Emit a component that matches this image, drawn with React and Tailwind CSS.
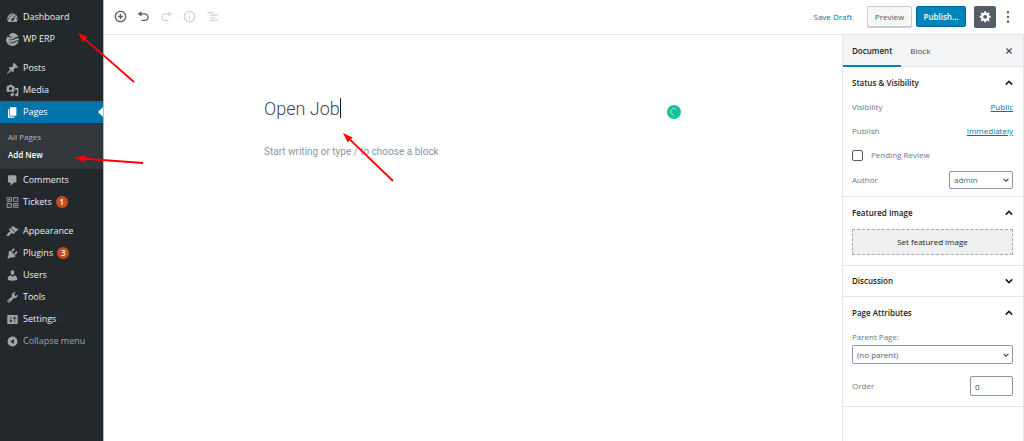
import { useState } from 'react'
import clsx from 'clsx'

const icons = {
  dashboard:
    'M3.76 17h12.48c1.1-1.36 1.76-3.09 1.76-4.97 0-4.42-3.58-8.03-8-8.03s-8 3.61-8 8.03c0 1.88.66 3.61 1.76 4.97zM10 5a1 1 0 1 1 0 2 1 1 0 0 1 0-2zM6 7a1 1 0 1 1 0 2 1 1 0 0 1 0-2zM14.5 6.6l.6.5-3.4 5.4c.5.9.3 2-.6 2.6-1 .6-2.2.3-2.7-.6-.6-1-.3-2.2.6-2.7.3-.2.7-.3 1-.3zM4 10.5a1 1 0 1 1 0 2 1 1 0 0 1 0-2zM16 10.5a1 1 0 1 1 0 2 1 1 0 0 1 0-2z',
  post: 'M10.44 3.02l1.82-1.82 6.36 6.35-1.83 1.82c-1.05-.68-2.48-.57-3.41.36l-.75.75c-.92.93-1.04 2.35-.35 3.41l-1.83 1.82-2.41-2.41-2.8 2.79c-.42.42-3.38 2.71-3.8 2.29s1.86-3.39 2.28-3.81l2.79-2.79L4.1 9.36l1.83-1.82c1.05.69 2.48.57 3.4-.36l.75-.75c.93-.92 1.05-2.35.36-3.41z',
  media:
    'M13 11V4c0-.55-.45-1-1-1h-1.67L9 1H5L3.67 3H2c-.55 0-1 .45-1 1v7c0 .55.45 1 1 1h10c.55 0 1-.45 1-1zM7 4.5c1.38 0 2.5 1.12 2.5 2.5S8.38 9.5 7 9.5 4.5 8.38 4.5 7 5.62 4.5 7 4.5zM14 6h5v10.5c0 1.38-1.12 2.5-2.5 2.5S14 17.88 14 16.5s1.12-2.5 2.5-2.5c.17 0 .34.02.5.05V9h-3V6zm-4 8.05V13h2v3.5c0 1.38-1.12 2.5-2.5 2.5S7 17.88 7 16.5 8.12 14 9.5 14c.17 0 .34.02.5.05z',
  page: 'M6 15V2h10v13H6zm-1 1h8v2H3V5h2v11z',
  comments:
    'M5 2h9c1.1 0 2 .9 2 2v7c0 1.1-.9 2-2 2h-2l-5 5v-5H5c-1.1 0-2-.9-2-2V4c0-1.1.9-2 2-2z',
  appearance:
    'M14.48 11.06L7.41 3.99l1.5-1.5c.5-.56 2.3-.47 3.51.32 1.21.8 1.43 1.28 2.91 2.1 1.18.64 2.45 1.26 4.45.85zm-.71.71L6.7 4.7 4.93 6.47c-.39.39-.39 1.02 0 1.41l1.06 1.06c.39.39.39 1.03 0 1.42-.6.6-1.43 1.11-2.21 1.69-.35.26-.7.53-1.01.84C1.43 14.23.4 16.08 1.4 17.07c.99 1 2.84-.03 4.18-1.36.31-.31.58-.66.85-1.02.57-.78 1.08-1.61 1.69-2.21.39-.39 1.02-.39 1.41 0l1.06 1.06c.39.39 1.02.39 1.41 0z',
  plugins:
    'M13.11 4.36L9.87 7.6 8 5.73l3.24-3.24c.35-.34 1.05-.2 1.56.32.52.51.66 1.21.31 1.55zm-8 1.77l.91-1.12 9.01 9.01-1.19.84c-.71.71-2.63 1.16-3.82 1.16H6.14L4.9 17.26c-.59.59-1.54.59-2.12 0-.59-.58-.59-1.53 0-2.12l1.24-1.24v-3.88c0-1.13.4-3.19 1.09-3.89zm7.26 3.97l3.24-3.24c.34-.35 1.04-.21 1.55.31.52.51.66 1.21.31 1.55l-3.24 3.25z',
  users:
    'M10 9.25c-2.27 0-2.73-3.44-2.73-3.44C7 4.02 7.82 2 9.97 2c2.16 0 2.98 2.02 2.71 3.81 0 0-.41 3.44-2.68 3.44zm0 2.57L12.72 10c2.39 0 4.52 2.33 4.52 4.53v2.49s-3.65 1.13-7.24 1.13c-3.65 0-7.24-1.13-7.24-1.13v-2.49c0-2.25 1.94-4.48 4.47-4.48z',
  tools:
    'M16.68 9.77c-1.34 1.34-3.3 1.67-4.95.99l-5.41 6.52c-.99.99-2.59.99-3.58 0s-.99-2.59 0-3.57l6.52-5.42c-.68-1.65-.35-3.61.99-4.95 1.28-1.28 3.12-1.62 4.72-1.06l-2.89 2.89 2.82 2.82 2.86-2.87c.53 1.58.18 3.39-1.08 4.65zM3.81 16.21c.4.39 1.04.39 1.43 0 .4-.4.4-1.04 0-1.43-.39-.4-1.03-.4-1.43 0-.39.39-.39 1.03 0 1.43z',
  settings:
    'M18 16V4c0-.55-.45-1-1-1H3c-.55 0-1 .45-1 1v12c0 .55.45 1 1 1h14c.55 0 1-.45 1-1zM8 11h1c.55 0 1 .45 1 1s-.45 1-1 1H8v1.5c0 .28-.22.5-.5.5s-.5-.22-.5-.5V13H6c-.55 0-1-.45-1-1s.45-1 1-1h1V5.5c0-.28.22-.5.5-.5s.5.22.5.5V11zm5-2h-1c-.55 0-1-.45-1-1s.45-1 1-1h1V5.5c0-.28.22-.5.5-.5s.5.22.5.5V7h1c.55 0 1 .45 1 1s-.45 1-1 1h-1v5.5c0 .28-.22.5-.5.5s-.5-.22-.5-.5V9z',
  collapse: 'M10 1a9 9 0 1 1 0 18 9 9 0 0 1 0-18zm2.5 13.5v-9L6 10z',
  erp: 'M10 0c4.3 0 8 2.7 9.4 6.5-3-.8-5.2.5-7.4 1.8C9.5 9.8 7 11 3.5 9.3 6 12 9.5 11.7 12.5 10c2.5-1.4 4.8-2.5 7.4-1.5V10c0 .4 0 .8-.1 1.2-2.5-.7-4.5.5-6.5 1.7-2.7 1.6-5.6 2.7-9.3.8 2.8 3 6.6 2.6 9.7.9 1.9-1.1 3.7-2 5.5-1.7C17.9 17 14.3 20 10 20 5.2 20 1.2 16.6.2 12.1 0 9 1 7 3 5.5 5.5 8 8.5 7.2 11 5.6 8.5 6.2 6 6 4.5 4 5.5 2 7.5 0 10 0z',
  tickets:
    'M1 2h8v7H1V2zm1.2 1.2v4.6h5.6V3.2H2.2zM3.3 4.2h3.4v2.6H3.3zM11 2h8v7h-8V2zm1.5 1.5v4h5v-4h-5zM1 11h8v7H1v-7zm1.5 1.5v4h5v-4h-5zM11 11h8v7h-8v-7zm1.2 1.2v4.6h5.6v-4.6h-5.6zM13.300 13.2h3.4v2.6h-3.4z',
  insert:
    'M10 1c-5 0-9 4-9 9s4 9 9 9 9-4 9-9-4-9-9-9zm0 16c-3.9 0-7-3.1-7-7s3.1-7 7-7 7 3.1 7 7-3.1 7-7 7zm1-11H9v3H6v2h3v3h2v-3h3V9h-3V6z',
  undo: 'M12 5H7V2L1 6l6 4V7h5c2.2 0 4 1.8 4 4s-1.8 4-4 4H7v2h5c3.3 0 6-2.7 6-6s-2.7-6-6-6z',
  redo: 'M8 5h5V2l6 4-6 4V7H8c-2.2 0-4 1.8-4 4s1.8 4 4 4h5v2H8c-3.3 0-6-2.7-6-6s2.7-6 6-6z',
  info: 'M9 15h2V9H9v6zm1-10c-.5 0-1 .5-1 1s.5 1 1 1 1-.5 1-1-.5-1-1-1zm0-4c-5 0-9 4-9 9s4 9 9 9 9-4 9-9-4-9-9-9zm0 16c-3.9 0-7-3.1-7-7s3.1-7 7-7 7 3.1 7 7-3.1 7-7 7z',
  outline: 'M2 3h10v2H2zM6 7h12v2H6zM6 11h8v2H6zM6 15h12v2H6z',
  gear: 'M18 12h-2.18c-.17.7-.44 1.35-.81 1.93l1.54 1.54-2.1 2.1-1.54-1.54c-.58.36-1.23.63-1.91.79V19H8v-2.18c-.68-.16-1.33-.43-1.91-.79l-1.54 1.54-2.12-2.12 1.54-1.54c-.36-.58-.63-1.23-.79-1.91H1V9.03h2.17c.16-.7.44-1.35.8-1.94L2.43 5.55l2.1-2.1 1.54 1.54c.58-.37 1.24-.64 1.93-.81V2h3v2.18c.68.16 1.33.43 1.91.79l1.54-1.54 2.12 2.12-1.54 1.54c.36.59.64 1.24.8 1.94H18V12zm-8.5 1.5c1.66 0 3-1.34 3-3s-1.34-3-3-3-3 1.34-3 3 1.34 3 3 3z',
  more: 'M10 0a2 2 0 1 1 0 4 2 2 0 0 1 0-4zM10 8a2 2 0 1 1 0 4 2 2 0 0 1 0-4zM10 16a2 2 0 1 1 0 4 2 2 0 0 1 0-4z',
  close:
    'M14.95 6.46L11.41 10l3.54 3.54-1.41 1.41L10 11.42l-3.53 3.53-1.42-1.42L8.58 10 5.05 6.47l1.42-1.42L10 8.58l3.54-3.53z',
}

function Icon({ name, className }) {
  return (
    <svg viewBox="0 0 20 20" fill="currentColor" fillRule="evenodd" className={clsx('shrink-0', className)} aria-hidden="true">
      <path d={icons[name]} />
    </svg>
  )
}

function Chevron({ up, className }) {
  return (
    <svg viewBox="0 0 10 10" fill="none" stroke="currentColor" strokeWidth="2" className={className} aria-hidden="true">
      <path d={up ? 'M1 7l4-4 4 4' : 'M1 3l4 4 4-4'} />
    </svg>
  )
}

const menu = [
  [
    { label: 'Dashboard', icon: 'dashboard' },
    { label: 'WP ERP', icon: 'erp' },
  ],
  [
    { label: 'Posts', icon: 'post' },
    { label: 'Media', icon: 'media' },
    { label: 'Pages', icon: 'page', active: true, children: ['All Pages', 'Add New'] },
    { label: 'Comments', icon: 'comments' },
    { label: 'Tickets', icon: 'tickets', count: 1 },
  ],
  [
    { label: 'Appearance', icon: 'appearance' },
    { label: 'Plugins', icon: 'plugins', count: 3 },
    { label: 'Users', icon: 'users' },
    { label: 'Tools', icon: 'tools' },
    { label: 'Settings', icon: 'settings' },
  ],
]

function MenuItem({ item }) {
  return (
    <li>
      <a
        href="#"
        className={clsx(
          'relative flex h-[22px] items-center gap-1 pl-[6px]',
          item.active ? 'bg-[#0073aa] text-white' : 'text-[#eee]'
        )}
      >
        <Icon name={item.icon} className={clsx('size-[13px]', !item.active && 'text-[#a0a5aa]')} />
        <span>{item.label}</span>
        {item.count && (
          <span className="flex size-3 items-center justify-center rounded-full bg-[#ca4a1f] text-[8px] font-semibold text-white">
            {item.count}
          </span>
        )}
        {item.active && (
          <span className="absolute right-0 border-y-[5px] border-r-[5px] border-y-transparent border-r-white" />
        )}
      </a>
      {item.children && (
        <ul className="bg-[#32373c] py-[5px] text-[8px]">
          {item.children.map((child) => (
            <li key={child}>
              <a
                href="#"
                className={clsx(
                  'flex h-[18px] items-center pl-2',
                  child === 'Add New' ? 'font-semibold text-white' : 'text-[#b4b9be]'
                )}
              >
                {child}
              </a>
            </li>
          ))}
        </ul>
      )}
    </li>
  )
}

function AdminMenu() {
  return (
    <nav className="w-[104px] shrink-0 border-r border-[#b5b8ba] bg-[#23282d] pt-[6px] text-[9px]">
      <div className="flex flex-col gap-[7px]">
        {menu.map((group, i) => (
          <ul key={i}>
            {group.map((item) => (
              <MenuItem key={item.label} item={item} />
            ))}
          </ul>
        ))}
      </div>
      <button type="button" className="flex h-[22px] items-center gap-1 pl-[6px] text-[#a0a5aa]">
        <Icon name="collapse" className="size-[13px] p-px" />
        Collapse menu
      </button>
    </nav>
  )
}

const tools = [
  { icon: 'insert', label: 'Add block' },
  { icon: 'undo', label: 'Undo' },
  { icon: 'redo', label: 'Redo', disabled: true },
  { icon: 'info', label: 'Content structure', disabled: true },
  { icon: 'outline', label: 'Block navigation', disabled: true },
]

function Toolbar() {
  return (
    <header className="flex h-[35px] items-center justify-between border-b border-[#e2e4e7] px-[10px] pb-px">
      <div className="flex gap-[10px]">
        {tools.map((tool) => (
          <button
            key={tool.icon}
            type="button"
            aria-label={tool.label}
            disabled={tool.disabled}
            className="text-[#555d66] disabled:text-[#d0d3d6]"
          >
            <Icon name={tool.icon} className="size-[13px]" />
          </button>
        ))}
      </div>
      <div className="flex items-center">
        <button type="button" className="mr-[15px] text-[#0073aa]">Save Draft</button>
        <button
          type="button"
          className="mr-1 h-[21px] w-[45px] rounded-xs border border-[#ccc] bg-[#f7f7f7] text-[#555] shadow-[0_1px_0_#ccc]"
        >
          Preview
        </button>
        <button
          type="button"
          className="mr-2 h-[21px] w-[50px] rounded-xs border border-[#006799] bg-[#0085ba] font-semibold text-white"
        >
          Publish…
        </button>
        <button
          type="button"
          aria-label="Settings"
          className="mr-[6px] flex size-[22px] items-center justify-center rounded-xs bg-[#555d66] text-white"
        >
          <Icon name="gear" className="size-[13px]" />
        </button>
        <button type="button" aria-label="More tools" className="text-[#555d66]">
          <Icon name="more" className="size-3" />
        </button>
      </div>
    </header>
  )
}

function Editor() {
  const [title, setTitle] = useState('Open Job')

  return (
    <main className="min-w-0 flex-1 px-4 pt-[61px] font-[Roboto,sans-serif]">
      <div className="mx-auto max-w-[418px]">
        <div className="flex items-center">
          <input
            aria-label="Add title"
            value={title}
            onChange={(e) => setTitle(e.target.value)}
            className="field-sizing-content h-6 text-[18px] font-light text-[#40464d] outline-none"
          />
          <span className="h-5 w-px bg-[#191e23]" />
          <span className="mt-2 mr-px ml-auto flex size-[14px] items-center justify-center rounded-full bg-[#15c39a]">
            <svg viewBox="0 0 10 10" fill="none" stroke="#a5ecd9" strokeWidth="1" className="size-[10px]" aria-hidden="true">
              <path d="M6.500 2A3.200 3.200 0 1 0 5 8" />
            </svg>
          </span>
        </div>
        <p className="mt-6 text-[10px] text-[#8d96a0]">Start writing or type / to choose a block</p>
      </div>
    </main>
  )
}

function Panel({ title, open = true, children }) {
  return (
    <section className="border-b border-[#e2e4e7] pr-[10px] pl-[9px]">
      <h2>
        <button
          type="button"
          aria-expanded={open}
          className={clsx(
            'flex w-full items-center justify-between font-semibold text-[#191e23]',
            open ? 'h-8' : 'h-[30px]'
          )}
        >
          {title}
          <Chevron up={open} className="size-2" />
        </button>
      </h2>
      {children}
    </section>
  )
}

function Select({ id, value, className }) {
  return (
    <div className={clsx('relative', className)}>
      <select
        id={id}
        className="h-full w-full appearance-none rounded-xs border border-[#8d96a0] bg-white pl-1 text-[#555d66]"
      >
        <option>{value}</option>
      </select>
      <Chevron className="pointer-events-none absolute top-1/2 right-1 size-[6px] -translate-y-1/2 text-[#40464d]" />
    </div>
  )
}

function Sidebar() {
  return (
    <aside className="w-[182px] shrink-0 border-x border-[#e2e4e7] text-[#6c7781]">
      <div className="flex h-8 items-stretch border-b border-[#e2e4e7] bg-[#f3f4f5] pr-[10px] text-[#40464d]">
        <button
          type="button"
          className="-mb-px border-b-2 border-[#0085ba] px-[9px] pt-px font-semibold text-[#191e23]"
        >
          Document
        </button>
        <button type="button" className="px-[9px]">Block</button>
        <button type="button" aria-label="Close settings" className="ml-auto">
          <Icon name="close" className="-mr-[2px] size-3" />
        </button>
      </div>

      <Panel title="Status & Visibility">
        <div className="flex flex-col gap-2 pb-[7px]">
          <div className="flex h-4 items-center justify-between">
            <span>Visibility</span>
            <a href="#" className="text-[#0073aa] underline">Public</a>
          </div>
          <div className="flex h-4 items-center justify-between">
            <span>Publish</span>
            <a href="#" className="text-[#0073aa] underline">Immediately</a>
          </div>
          <label className="flex h-4 items-center gap-2">
            <input type="checkbox" className="size-[11px] appearance-none rounded-xs border border-[#555d66] checked:bg-[#0085ba]" />
            Pending Review
          </label>
          <div className="flex h-[18px] items-center justify-between">
            <label htmlFor="author">Author</label>
            <Select id="author" value="admin" className="h-[18px] w-16" />
          </div>
        </div>
      </Panel>

      <Panel title="Featured Image">
        <button
          type="button"
          className="mb-[10px] h-[26px] w-full border border-dashed border-[#a2aab2] bg-[#edeff0] text-[#191e23]"
        >
          Set featured image
        </button>
      </Panel>

      <Panel title="Discussion" open={false} />

      <Panel title="Page Attributes">
        <label htmlFor="parent" className="flex h-4 items-center">Parent Page:</label>
        <Select id="parent" value="(no parent)" className="h-[19px] w-full" />
        <div className="flex justify-between pt-3 pb-[10px]">
          <label htmlFor="order" className="flex h-5 items-center">Order</label>
          <input
            id="order"
            defaultValue="0"
            className="h-5 w-[43px] rounded-xs border border-[#8d96a0] px-1 text-[#40464d]"
          />
        </div>
      </Panel>
    </aside>
  )
}

const arrows = [
  { from: [134, 82], to: [78, 33] },
  { from: [143, 163], to: [75, 158] },
  { from: [393, 181], to: [343, 133] },
]

// Red callout arrows drawn over the page
function Annotations() {
  return (
    <svg width="400" height="200" className="pointer-events-none absolute top-0 left-0" aria-hidden="true">
      <defs>
        <marker id="head" viewBox="0 0 10 7" refX="0" refY="3.5" markerWidth="10" markerHeight="7" markerUnits="userSpaceOnUse" orient="auto">
          <path d="M0 0l10 3.500L0 7z" fill="#f00" />
        </marker>
      </defs>
      {arrows.map(({ from, to }) => {
        const length = Math.hypot(to[0] - from[0], to[1] - from[1])
        const t = (length - 10) / length
        return (
          <line
            key={from[0]}
            x1={from[0]}
            y1={from[1]}
            x2={from[0] + (to[0] - from[0]) * t}
            y2={from[1] + (to[1] - from[1]) * t}
            stroke="#f00"
            strokeWidth="1.800"
            markerEnd="url(#head)"
          />
        )
      })}
    </svg>
  )
}

export default function App() {
  return (
    <div className="relative flex min-h-screen bg-white font-['Open_Sans',sans-serif] text-[8px]">
      <AdminMenu />
      <div className="flex min-w-0 flex-1 flex-col">
        <Toolbar />
        <div className="flex flex-1">
          <Editor />
          <Sidebar />
        </div>
      </div>
      <Annotations />
    </div>
  )
}
